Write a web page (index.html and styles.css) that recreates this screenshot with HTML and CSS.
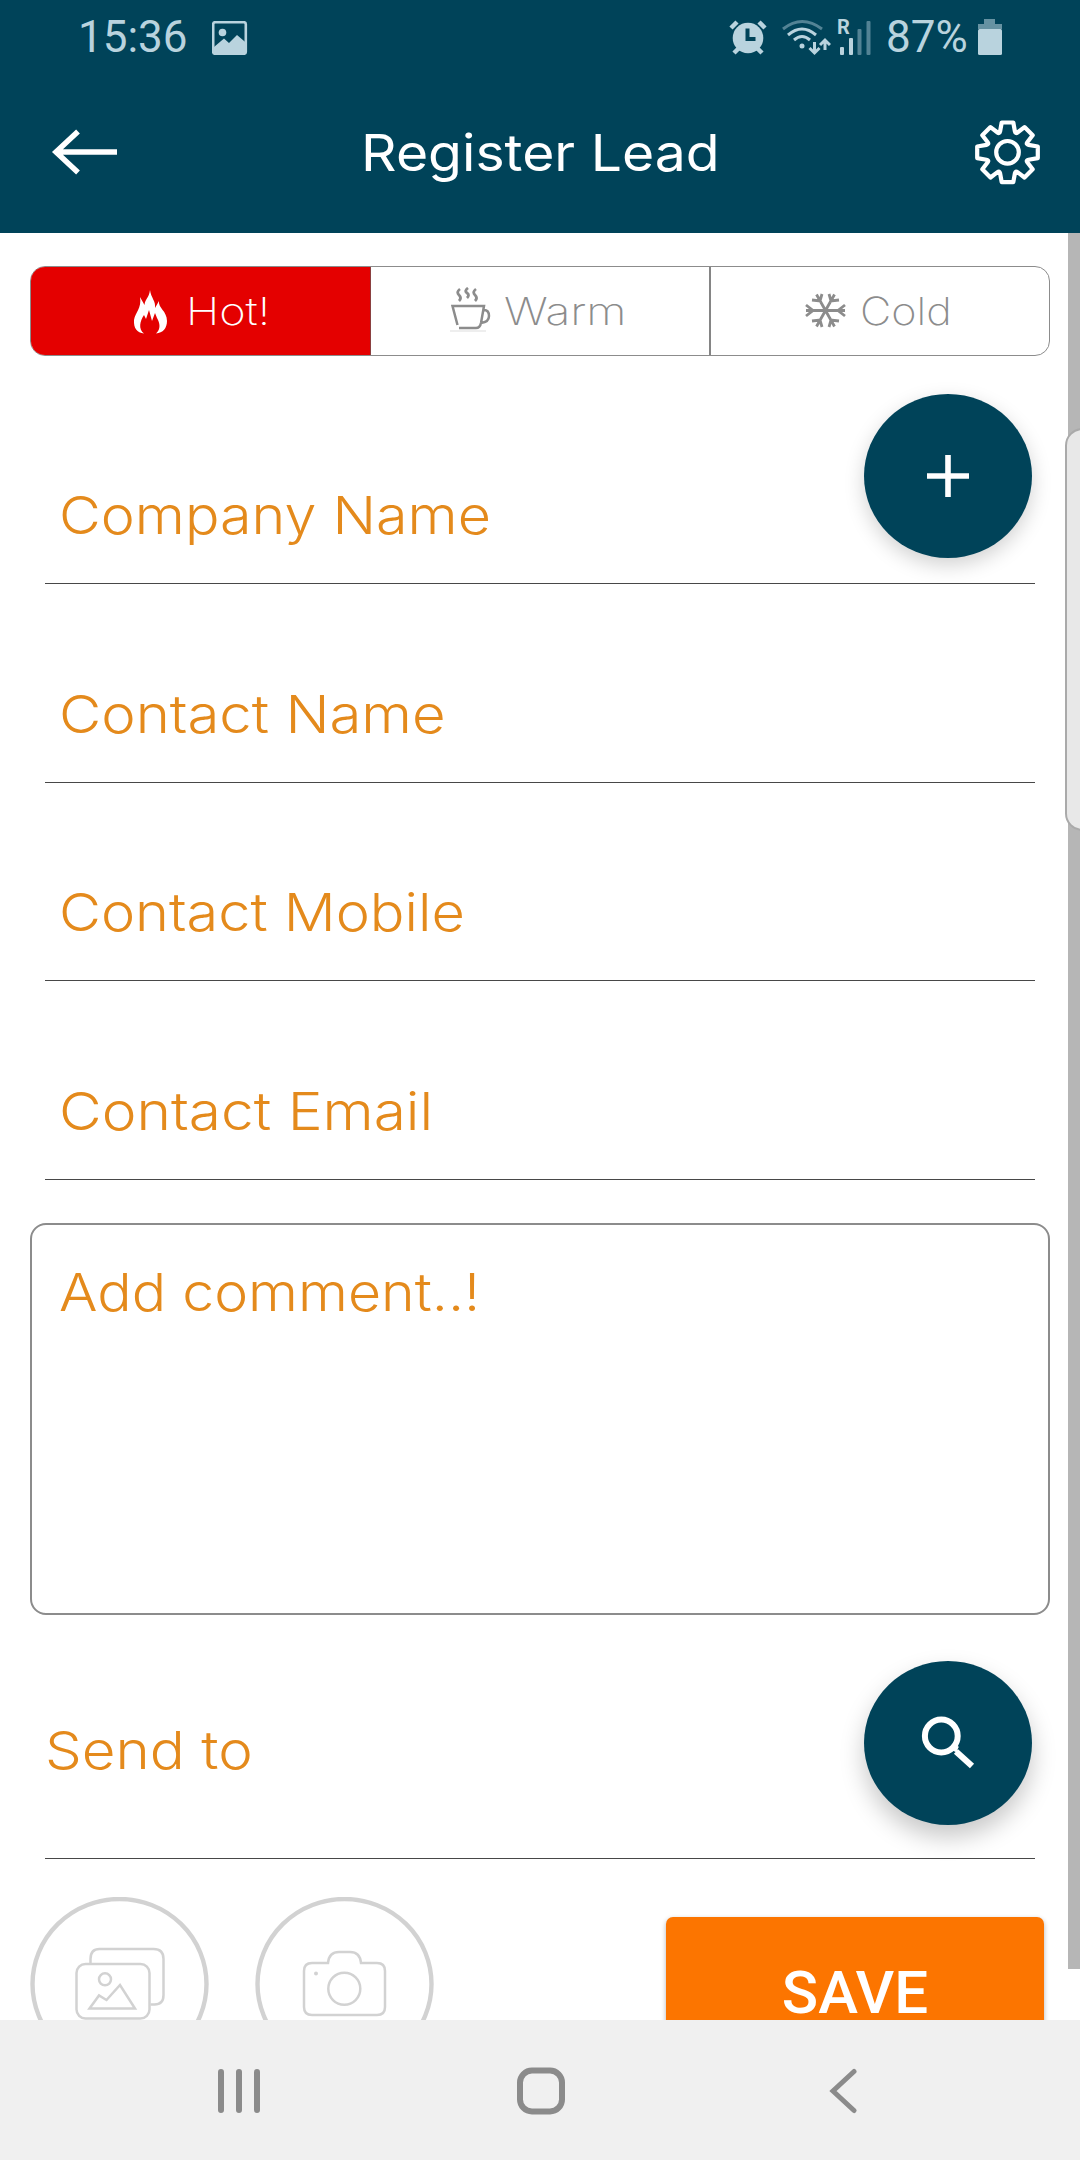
FILE: index.html
```html
<!DOCTYPE html>
<html lang="en">
<head>
<meta charset="utf-8">
<title>Register Lead</title>
<link rel="stylesheet" href="styles.css">
</head>
<body>
<div class="screen">
  <header class="top">
    <div class="status">
      <span class="clock">15:36</span>
      <svg class="picture" viewBox="0 0 36 34"><rect x="1.2" y="1.2" width="32.6" height="31.6" rx="2" fill="none" stroke="currentColor" stroke-width="2.6"/><circle cx="10.5" cy="11.5" r="3.8" fill="currentColor"/><path d="M2 26l10-8.500 5 4.500 8-8 10 8.500V31l-2 2H2z" fill="currentColor"/></svg>
      <span class="spacer"></span>
      <svg class="alarm" viewBox="729 18 39 36"><circle cx="748" cy="37" r="15.300" fill="currentColor"/><path d="M731 27l6-6M765 27l-6-6M734 52l5-5M762 52l-5-5" stroke="currentColor" stroke-width="4.500"/><path d="M747.500 27.500v10.500h8" fill="none" stroke="#004359" stroke-width="4"/></svg>
      <svg class="wifi" viewBox="781 17 50 38"><g fill="none" stroke="currentColor" stroke-width="3"><path d="M783 28q19-15 39 0" opacity=".45"/><path d="M788 34q14-12 28 0M794 39q8-7 16 0"/><path d="M814.500 41v11M809.500 47l5 5 5-5M825 49V39M820 44l5-5 5 5"/></g><circle cx="802" cy="45" r="2.500" fill="currentColor"/></svg>
      <span class="signal"><b class="roam">R</b><svg viewBox="837 17 36 38"><g fill="currentColor"><rect x="840" y="46" width="4" height="8" rx="1"/><rect x="849" y="37" width="4" height="17" rx="1"/><rect x="857.500" y="28" width="4" height="26" rx="1" opacity=".45"/><rect x="866.500" y="20" width="4" height="34" rx="1" opacity=".45"/></g></svg></span>
      <span class="percent">87%</span>
      <svg class="battery" viewBox="978 18 24 36"><path d="M984 18h11v5h7v5h-24v-5h6z" fill="currentColor" opacity=".55"/><rect x="978" y="28" width="24" height="26" rx="1.500" fill="currentColor"/></svg>
    </div>
    <div class="bar">
      <svg class="back" viewBox="50 124 70 56"><path d="M117 152H56M78 131.500L56 152l22 20.500" fill="none" stroke="#fff" stroke-width="5.500"/></svg>
      <h1 class="title">Register Lead</h1>
      <svg class="gear" viewBox="-34.500 -34.300 69 68"><g fill="none" stroke="#fff" stroke-width="4.200" stroke-linejoin="round"><path d="M-5.800-29.800H5.800L7.400-21Q8-18.300 10-19.800L17-25.200L25.200-17L19.800-10Q18.300-8 21-7.400L30.300-5.800V5.800L21 7.400Q18.300 8 19.800 10L25.200 17L17 25.200L10 19.800Q8 18.300 7.400 21L5.800 29.800H-5.800L-7.400 21Q-8 18.300-10 19.800L-17 25.200L-25.200 17L-19.800 10Q-18.300 8-21 7.400L-30.300 5.800V-5.800L-21-7.400Q-18.300-8-19.800-10L-25.200-17L-17-25.200L-10-19.800Q-8-18.300-7.400-21Z"/><circle r="11.300"/></g></svg>
    </div>
  </header>
  <main class="page">
    <div class="segments">
      <div class="segment hot"><svg class="flame" viewBox="133 288 35 45"><path d="M150 289C151 297 156 300 155 307L159 300C158 307 167 310 167 320C167 327 163 332 156 332.500C161 328 160 322 157 317L155 312L152 320L149 309L146 318L144 314C140 320 138 328 144 332.500C137 332 133.500 327 134 319C135 312 142 307 140 296L144.500 304C145 298 149 297 150 289Z" fill="#fff"/></svg><span class="seg-label">Hot!</span></div>
      <div class="segment warm"><svg class="cup" viewBox="450 288 42 46"><g fill="none" stroke="#8c8c8c"><path d="M457.500 326l-5-19h31.500l-3 17q-1 5-5 5h-17M484 311q5 0 5 6t-8 7" stroke-width="2.500"/><path d="M460 290q-4 3-1 6t0 6M468 289q-4 3-1 5t0 5M476 290q-4 3-1 6t0 6" stroke-width="2.800"/><path d="M450 332h36" stroke-width="1" opacity=".3"/></g></svg><span class="seg-label">Warm</span></div>
      <div class="segment cold"><svg class="snow" viewBox="805 293 41 36"><path d="M806 310.500H845M845 305l-7 5.500 7 5.500M806 305l7 5.500-7 5.500M816.500 294.500l18 32M834.500 294.500l-18 32M829 294l2 7 8-1M822 294l-2 7-8-1M829 327l2-7 8 1M822 327l-2-7-8 1" fill="none" stroke="#8c8c8c" stroke-width="2.800"/></svg><span class="seg-label">Cold</span></div>
    </div>
    <div class="field first"><span class="hint company">Company Name</span><button class="fab" aria-label="Add company"><svg viewBox="0 0 42 42"><path d="M21 0v42M0 21h42" stroke="#fff" stroke-width="5.600"/></svg></button></div>
    <div class="field"><span class="hint name">Contact Name</span></div>
    <div class="field"><span class="hint mobile">Contact Mobile</span></div>
    <div class="field"><span class="hint email">Contact Email</span></div>
    <div class="comment"><span class="hint note">Add comment..!</span></div>
    <div class="field send"><span class="hint sendto">Send to</span><button class="fab search" aria-label="Search"><svg class="lens" viewBox="920 1715 54 53"><circle cx="940.300" cy="1735" r="16.400" fill="none" stroke="#fff" stroke-width="6"/><path d="M951.500 1746l5 2.500M955 1750.500l16 14.500" stroke="#fff" stroke-width="6.200"/></svg></button></div>
    <div class="actions">
      <svg class="round" viewBox="30 1898 179 174"><g fill="none" stroke="#d2d2d2"><ellipse cx="119.500" cy="1985" rx="87" ry="85" stroke-width="4.400"/><g stroke-width="2.500"><rect x="76.500" y="1965" width="73" height="54.500" rx="9"/><path d="M90.500 1964v-4q0-10 9-10h54q10 0 10 10v36q0 9.500-9 9.500h-4"/><circle cx="105" cy="1980.300" r="6"/><path d="M89.500 2009.500l9.500-13 7.500 4.500 13.500-15 15 23.500z"/></g></g></svg>
      <svg class="round" viewBox="255 1898 179 174"><g fill="none" stroke="#d2d2d2"><ellipse cx="344.500" cy="1985" rx="87" ry="85" stroke-width="4.400"/><path d="M328 1964h-16q-8 0-8 8v36q0 8 8 8h65q8 0 8-8v-36q0-8-8-8h-16q-1-11-11-11h-11q-10 0-11 11z" stroke-width="2.500"/><circle cx="344.300" cy="1989.700" r="16" stroke-width="2.500"/></g><circle cx="316" cy="1974.500" r="2" fill="#d2d2d2"/></svg>
      <button class="save">SAVE</button>
    </div>
    <div class="scrollbar"></div>
    <div class="edge"></div>
  </main>
  <nav class="nav">
    <svg viewBox="218 2066 44 50"><path d="M221 2072v38M239 2072v38M257 2072v38" stroke="#8b8b8b" stroke-width="6" stroke-linecap="round"/></svg>
    <svg viewBox="516 2066 50 50"><rect x="520" y="2070.500" width="42" height="41" rx="12" fill="none" stroke="#8b8b8b" stroke-width="6"/></svg>
    <svg viewBox="829 2067 28 48"><path d="M854 2071.500L833 2091l21 19.500" fill="none" stroke="#8b8b8b" stroke-width="5" stroke-linecap="round"/></svg>
  </nav>
</div>
</body>
</html>
```
FILE: styles.css
```css
* { box-sizing: border-box; }
body { margin: 0; background: #fff; font-family: "Inter", sans-serif; }
button { border: 0; padding: 0; }
svg { display: block; flex: none; }
.screen { width: 1080px; height: 2160px; display: flex; flex-direction: column; overflow: hidden; }

.top { height: 233px; flex: none; background: #004359; color: #b9d3de; }
.status { display: flex; align-items: center; height: 73px; padding: 0 78px 0 78px; font: 400 44px/73px Roboto, sans-serif; }
.clock, .percent { padding-top: 2px; }
.picture { width: 36px; height: 34px; margin: 3px 0 0 24px; }
.spacer { flex: 1; }
.alarm { width: 39px; height: 36px; margin-right: 13px; }
.wifi { width: 50px; height: 38px; margin-right: 6px; }
.signal { position: relative; width: 36px; height: 38px; margin-right: 13px; }
.signal svg { width: 36px; height: 38px; }
.roam { position: absolute; left: 0; top: 0; font: 700 20px/18px Roboto, sans-serif; }
.percent { width: 92px; }
.battery { width: 24px; height: 36px; }
.bar { display: flex; align-items: center; justify-content: space-between; height: 158px; padding: 0 38px 0 50px; }
.back { width: 70px; height: 56px; }
.title { margin: 2px 12px 0 0; font-size: 51px; font-weight: 400; line-height: 60px; color: #fff; transform: scaleX(1.084); }
.gear { width: 69px; height: 68px; }

.page { position: relative; flex: none; height: 1787px; padding: 33px 30px 0; overflow: hidden; }
.segments { display: grid; grid-template-columns: 340px 340px 340px; height: 90px; border: 1px solid #8c8c8c; border-radius: 15px; overflow: hidden; color: #8c8c8c; }
.segment { display: flex; align-items: center; border-right: 2px solid #858585; }
.cold { border-right: 0; }
.hot { background: #e40000; color: #fff; border-right: 1px solid #8a4040; }
.seg-label { font-size: 38.500px; font-weight: 250; line-height: 46px; transform-origin: left; transform: scaleX(1.12); }
.hot .seg-label { transform: scaleX(1.17); }
.warm .seg-label { transform: scaleX(1.2); }
.flame { width: 35px; height: 45px; margin: 0 18px 0 102px; }
.cup { width: 42px; height: 46px; margin: -2px 12px 0 79px; }
.snow { width: 41px; height: 36px; margin: 0 14px 0 94px; }

.field { display: flex; align-items: flex-end; position: relative; height: 198.500px; margin: 0 15px; padding: 0 0 36px 14px; border-bottom: 1px solid #484848; }
.first { height: 228px; }
.hint { font-size: 52px; font-weight: 300; line-height: 62px; color: #e48a1c; white-space: nowrap; transform-origin: left; }
.company { transform: scaleX(1.104); }
.name { transform: scaleX(1.116); }
.mobile { transform: scaleX(1.108); }
.email { transform: scaleX(1.127); }
.note { transform: scaleX(1.1); }
.sendto { transform: scaleX(1.12); }
.fab { position: absolute; right: 3px; top: 38px; width: 168px; height: 164px; border-radius: 50%; background: #004359; display: grid; place-items: center; box-shadow: 0 7px 20px rgba(0,0,0,.18); }
.fab svg { width: 42px; height: 42px; }
.comment { height: 392px; margin-top: 43px; padding: 37px 27px; border: 2px solid #8c8c8c; border-radius: 16px; display: flex; align-items: flex-start; }
.send { height: 244.500px; padding: 0 0 76px; }
.send .fab { top: 46px; box-shadow: 0 12px 24px rgba(0,0,0,.22); }
.fab .lens { width: 54px; height: 53px; }
.actions { display: flex; align-items: flex-start; margin-top: 38px; }
.round { width: 179px; height: 174px; margin-right: 46px; }
.save { width: 378px; height: 150px; margin: 20px 0 0 186px; border-radius: 7px; background: #fc7500; color: #fff; font: 500 60px/152px Roboto, sans-serif; box-shadow: 0 2px 5px rgba(0,0,0,.3); }
.scrollbar { position: absolute; right: 0; top: 0; width: 12px; height: 1736px; background: #b6b6b6; }
.edge { position: absolute; right: -20px; top: 195px; width: 35px; height: 403px; border: 2px solid #aaa; border-radius: 18px; background: #e8e8e8; }

.nav { height: 140px; flex: none; display: flex; align-items: center; padding: 2px 223px 0 218px; justify-content: space-between; background: #f0f0f0; }
.nav svg:nth-child(1) { width: 44px; height: 50px; }
.nav svg:nth-child(2) { width: 50px; height: 50px; margin-left: -9px; }
.nav svg:nth-child(3) { width: 28px; height: 48px; }
```
